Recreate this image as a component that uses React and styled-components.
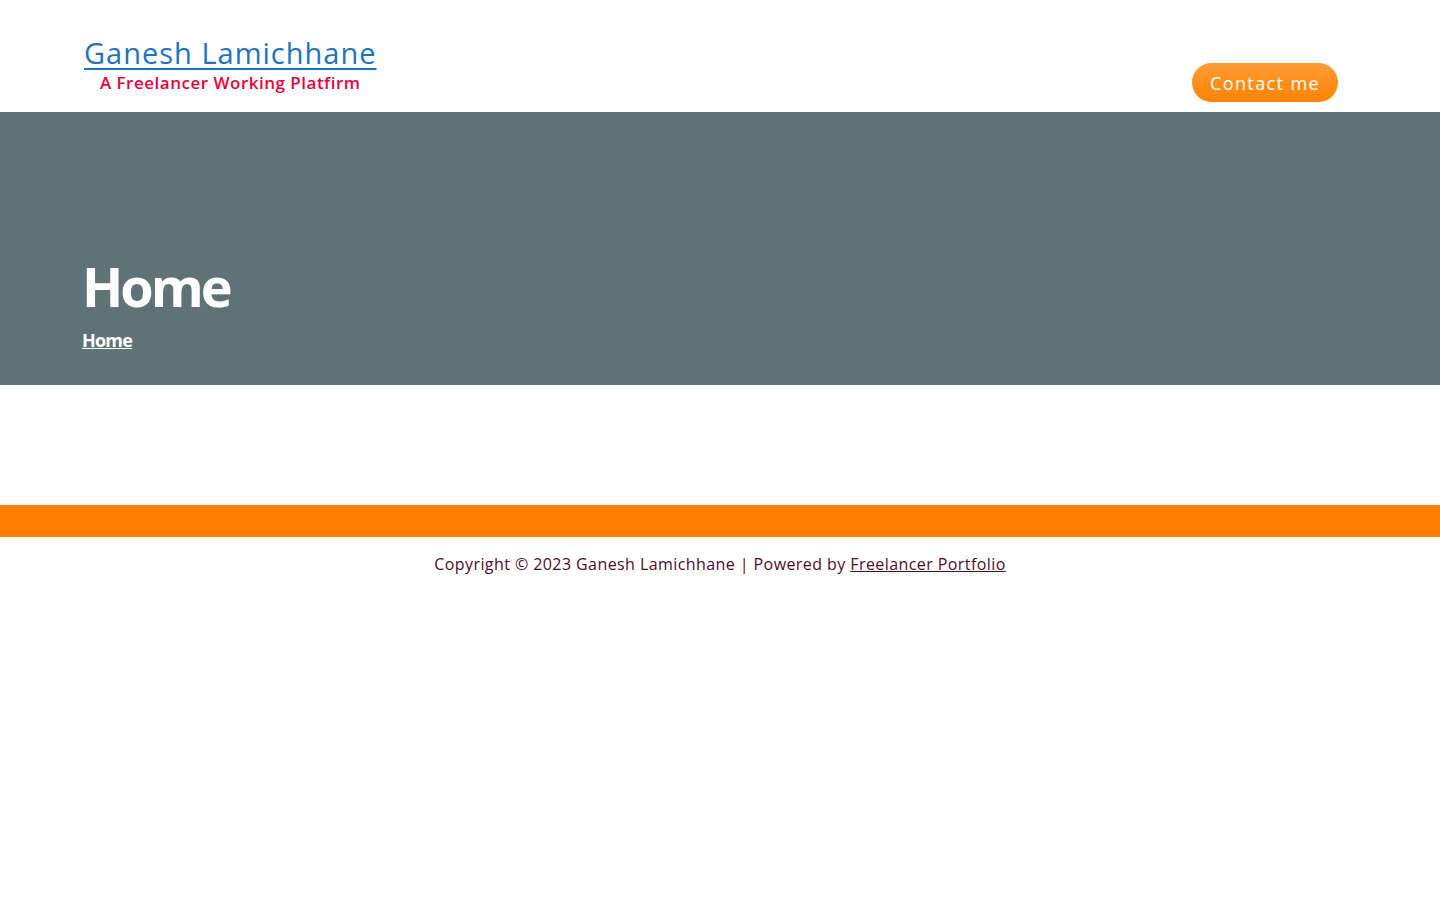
import React from "react";
import styled, { createGlobalStyle } from "styled-components";

const Global = createGlobalStyle`
  html, body { margin: 0; padding: 0; background: #fff; }
  body { font-family: "Open Sans", "DejaVu Sans", sans-serif; }
  * { box-sizing: border-box; }
`;

const Header = styled.header`
  height: 112px;
  display: flex;
  align-items: flex-start;
  justify-content: space-between;
  padding: 34px 102px 0 84px;
`;

const Brand = styled.div`
  display: flex;
  flex-direction: column;
  align-items: center;
`;

const Title = styled.a`
  font-size: 29px;
  line-height: 38px;
  color: #1e73be;
  text-decoration: underline;
  text-decoration-thickness: 2px;
  text-underline-offset: 4px;
  letter-spacing: 1px;
`;

const Tagline = styled.div`
  font-size: 17px;
  line-height: 22px;
  color: #e8003d;
  font-weight: 600;
  letter-spacing: 0.5px;
`;

const ContactButton = styled.a`
  margin-top: 29px;
  width: 146px;
  height: 39px;
  border-radius: 20px;
  background: linear-gradient(180deg, #ff9c36 0%, #ff8304 100%);
  color: #fff;
  font-size: 18px;
  display: flex;
  align-items: center;
  justify-content: center;
  font-weight: 500;
  letter-spacing: 1.4px;
`;

const Hero = styled.section`
  height: 273px;
  background: #5f7377;
  padding: 140px 82px 0;
  display: flex;
  flex-direction: column;
`;

const HeroTitle = styled.h1`
  margin: 0;
  color: #fff;
  font-size: 54px;
  line-height: 68px;
  font-weight: 700;
  letter-spacing: -3px;
`;

const Crumb = styled.a`
  margin-top: 8px;
  color: #fff;
  font-size: 18px;
  font-weight: 700;
  text-decoration: underline;
  letter-spacing: -0.8px;
  align-self: flex-start;
`;

const Spacer = styled.div`
  height: 120px;
`;

const OrangeBar = styled.div`
  height: 32px;
  background: #ff8000;
`;

const Footer = styled.footer`
  padding-top: 16px;
  text-align: center;
  font-size: 16px;
  line-height: 22px;
  color: #4d0b2b;
  letter-spacing: 0.42px;
`;

const FooterLink = styled.a`
  color: #4d0b2b;
  text-decoration: underline;
`;

export default function App() {
  return (
    <>
      <Global />
      <Header>
        <Brand>
          <Title>Ganesh Lamichhane</Title>
          <Tagline>A Freelancer Working Platfirm</Tagline>
        </Brand>
        <ContactButton>Contact me</ContactButton>
      </Header>
      <Hero>
        <HeroTitle>Home</HeroTitle>
        <Crumb>Home</Crumb>
      </Hero>
      <Spacer />
      <OrangeBar />
      <Footer>
        Copyright © 2023 Ganesh Lamichhane | Powered by{" "}
        <FooterLink>Freelancer Portfolio</FooterLink>
      </Footer>
    </>
  );
}
